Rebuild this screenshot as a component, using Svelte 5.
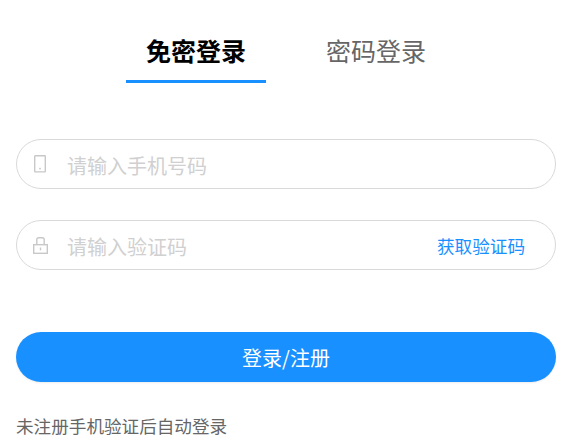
<script>
  let mode = $state('code');
</script>

<div class="login">
  <div class="tabs">
    <button class="tab" class:active={mode === 'code'} onclick={() => (mode = 'code')}>免密登录</button>
    <button class="tab" class:active={mode === 'pwd'} onclick={() => (mode = 'pwd')}>密码登录</button>
  </div>

  <div class="field phone">
    <svg class="icon" width="16" height="18" viewBox="0 0 16 18" fill="none" stroke="#c8c8c8" stroke-width="1.4">
      <rect x="1.7" y="0.7" width="10.6" height="16.2" rx="0.6" />
      <rect x="6.2" y="12.8" width="1.6" height="1.6" fill="#c8c8c8" stroke="none" />
    </svg>
    <input placeholder="请输入手机号码" />
  </div>

  <div class="field code">
    <svg class="icon" width="16" height="17" viewBox="0 0 16 17" fill="none" stroke="#c8c8c8" stroke-width="1.4">
      <rect x="0.7" y="7.7" width="13.6" height="8.6" />
      <path d="M3.8 7.7V2.6q0-1.9 1.9-1.9h3.6q1.9 0 1.9 1.9v5.1" />
      <path d="M7.5 10.5v2.8" />
    </svg>
    <input placeholder="请输入验证码" />
    <span class="send">获取验证码</span>
  </div>

  <button class="submit">登录/注册</button>
  <p class="hint">未注册手机验证后自动登录</p>
</div>

<style>
  :global(body) {
    margin: 0;
    background: #fff;
  }

  .login {
    display: flex;
    flex-direction: column;
    padding: 24px 9px 0 16px;
    font-family: "Noto Sans CJK SC", "Liberation Sans", sans-serif;
  }

  .tabs {
    display: flex;
    justify-content: center;
    gap: 40px;
  }

  .tab {
    width: 140px;
    height: 59px;
    padding: 0 0 5px;
    background: none;
    border: 0;
    border-bottom: 3px solid transparent;
    font-family: inherit;
    font-size: 25px;
    color: #666;
  }

  .tab.active {
    color: #000;
    font-weight: 700;
    border-bottom-color: #1890ff;
  }

  .field {
    display: flex;
    align-items: center;
    box-sizing: border-box;
    height: 50px;
    padding: 0 30px 0 16px;
    border: 1px solid #d9d9d9;
    border-radius: 25px;
  }

  .phone {
    margin-top: 56px;
  }

  .code {
    margin-top: 31px;
  }

  .icon {
    flex: none;
    width: 16px;
    margin-right: 18px;
  }

  input {
    flex: 1;
    min-width: 0;
    height: 30px;
    padding: 2px 0 0;
    border: 0;
    outline: none;
    font-family: inherit;
    font-size: 20px;
  }

  input::placeholder {
    color: #d0d0d0;
  }

  .send {
    font-size: 17.6px;
    color: #1890ff;
  }

  .submit {
    height: 50px;
    margin-top: 62px;
    border: 0;
    border-radius: 25px;
    background: #1890ff;
    box-shadow: 0 1px 2px rgba(0, 0, 0, 0.08);
    color: #fff;
    font-family: inherit;
    font-size: 20px;
  }

  .hint {
    margin: 31px 0 0;
    font-size: 17.6px;
    color: #666;
  }
</style>
